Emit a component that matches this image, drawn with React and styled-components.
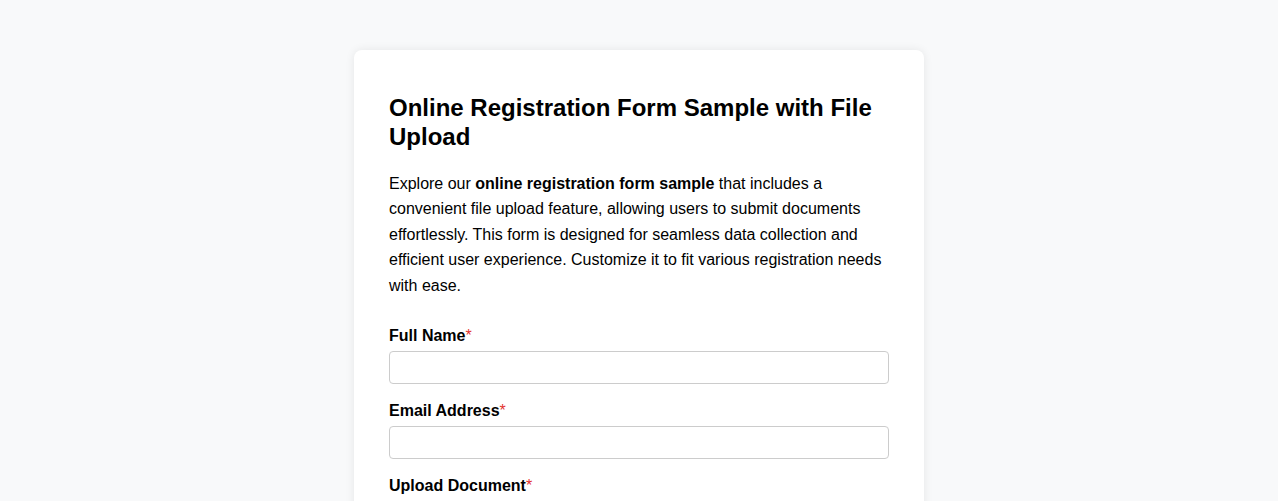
import React from "react";
import styled, { createGlobalStyle } from "styled-components";

const Global = createGlobalStyle`
  html, body { margin: 0; padding: 0; }
  body {
    background: #f8f9fa;
    font-family: "Liberation Sans", Arial, sans-serif;
    color: #000;
  }
`;

const Page = styled.div`
  display: flex;
  justify-content: center;
  padding-top: 50px;
  min-height: 501px;
  box-sizing: border-box;
`;

const Card = styled.div`
  width: 570px;
  box-sizing: border-box;
  background: #fff;
  border-radius: 8px;
  box-shadow: 0 0 10px rgba(0, 0, 0, 0.08);
  padding: 44px 35px 35px;
`;

const Title = styled.h2`
  margin: 0 0 19px;
  font-size: 24px;
  line-height: 28.8px;
  font-weight: bold;
`;

const Intro = styled.p`
  margin: 0 0 28px;
  font-size: 16px;
  line-height: 25.6px;
`;

const Form = styled.form`
  display: flex;
  flex-direction: column;
  gap: 18px;
`;

const Group = styled.div`
  display: flex;
  flex-direction: column;
`;

const Label = styled.label`
  font-size: 16px;
  font-weight: bold;
  line-height: 18.4px;
  margin-bottom: 6px;
`;

const Req = styled.span`
  color: #e3342f;
  font-weight: normal;
`;

const Input = styled.input`
  box-sizing: border-box;
  width: 100%;
  height: 33px;
  border: 1px solid #ccc;
  border-radius: 4px;
  padding: 6px 10px;
  font-size: 14px;
  font-family: inherit;
  background: #fff;
`;

export default function App() {
  return (
    <>
      <Global />
      <Page>
        <Card>
          <Title>Online Registration Form Sample with File Upload</Title>
          <Intro>
            Explore our <strong>online registration form sample</strong> that includes a
            convenient file upload feature, allowing users to submit documents effortlessly.
            This form is designed for seamless data collection and efficient user experience.
            Customize it to fit various registration needs with ease.
          </Intro>
          <Form onSubmit={(e) => e.preventDefault()}>
            <Group>
              <Label htmlFor="name">Full Name<Req>*</Req></Label>
              <Input id="name" type="text" />
            </Group>
            <Group>
              <Label htmlFor="email">Email Address<Req>*</Req></Label>
              <Input id="email" type="email" />
            </Group>
            <Group>
              <Label htmlFor="doc">Upload Document<Req>*</Req></Label>
              <Input id="doc" type="file" />
            </Group>
          </Form>
        </Card>
      </Page>
    </>
  );
}
